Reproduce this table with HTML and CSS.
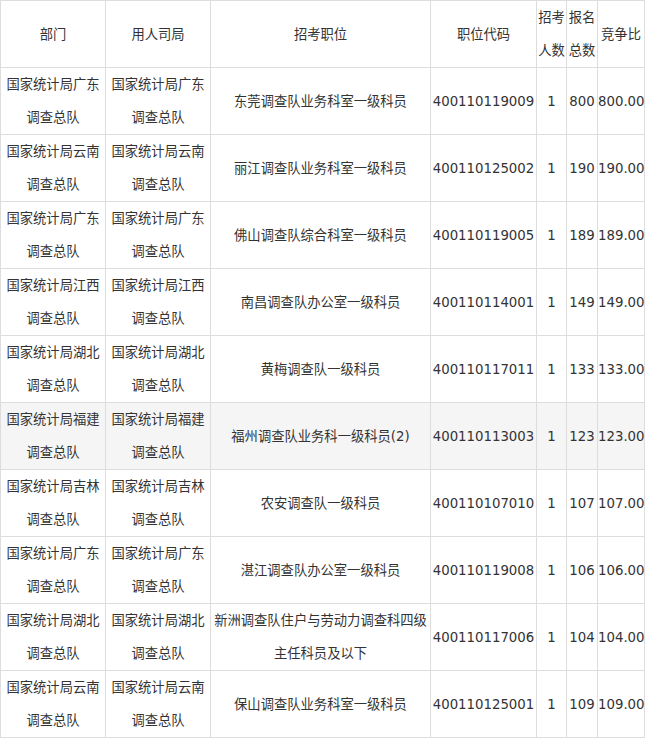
FILE: index.html
```html
<!DOCTYPE html>
<html lang="zh">
<head>
<meta charset="utf-8">
<title>职位竞争比</title>
<link rel="stylesheet" href="styles.css">
</head>
<body>
<table class="grid">
  <colgroup>
    <col class="c-dept"><col class="c-unit"><col class="c-pos"><col class="c-code"><col class="c-num"><col class="c-apply"><col class="c-ratio">
  </colgroup>
  <thead>
    <tr><th>部门</th><th>用人司局</th><th>招考职位</th><th>职位代码</th><th>招考人数</th><th>报名总数</th><th>竞争比</th></tr>
  </thead>
  <tbody>
    <tr><td>国家统计局广东调查总队</td><td>国家统计局广东调查总队</td><td>东莞调查队业务科室一级科员</td><td>400110119009</td><td>1</td><td>800</td><td>800.00</td></tr>
    <tr><td>国家统计局云南调查总队</td><td>国家统计局云南调查总队</td><td>丽江调查队业务科室一级科员</td><td>400110125002</td><td>1</td><td>190</td><td>190.00</td></tr>
    <tr><td>国家统计局广东调查总队</td><td>国家统计局广东调查总队</td><td>佛山调查队综合科室一级科员</td><td>400110119005</td><td>1</td><td>189</td><td>189.00</td></tr>
    <tr><td>国家统计局江西调查总队</td><td>国家统计局江西调查总队</td><td>南昌调查队办公室一级科员</td><td>400110114001</td><td>1</td><td>149</td><td>149.00</td></tr>
    <tr><td>国家统计局湖北调查总队</td><td>国家统计局湖北调查总队</td><td>黄梅调查队一级科员</td><td>400110117011</td><td>1</td><td>133</td><td>133.00</td></tr>
    <tr class="hl"><td>国家统计局福建调查总队</td><td>国家统计局福建调查总队</td><td>福州调查队业务科一级科员(2)</td><td>400110113003</td><td>1</td><td>123</td><td>123.00</td></tr>
    <tr><td>国家统计局吉林调查总队</td><td>国家统计局吉林调查总队</td><td>农安调查队一级科员</td><td>400110107010</td><td>1</td><td>107</td><td>107.00</td></tr>
    <tr><td>国家统计局广东调查总队</td><td>国家统计局广东调查总队</td><td>湛江调查队办公室一级科员</td><td>400110119008</td><td>1</td><td>106</td><td>106.00</td></tr>
    <tr><td>国家统计局湖北调查总队</td><td>国家统计局湖北调查总队</td><td>新洲调查队住户与劳动力调查科四级主任科员及以下</td><td>400110117006</td><td>1</td><td>104</td><td>104.00</td></tr>
    <tr><td>国家统计局云南调查总队</td><td>国家统计局云南调查总队</td><td>保山调查队业务科室一级科员</td><td>400110125001</td><td>1</td><td>109</td><td>109.00</td></tr>
  </tbody>
</table>
</body>
</html>
```

FILE: styles.css
```css
html, body {
  margin: 0;
  padding: 0;
  background: #ffffff;
}

.grid {
  border-collapse: collapse;
  table-layout: fixed;
  width: 644px;
  font-family: "DejaVu Sans", "Noto Sans CJK SC", sans-serif;
  font-size: 13.3px;
  line-height: 33px;
  color: #333333;
}

.grid th,
.grid td {
  border: 1px solid #dddddd;
  padding: 0;
  height: 66px;
  text-align: center;
  vertical-align: middle;
  font-weight: normal;
  overflow: visible;
}

.grid td:nth-child(4),
.grid td:nth-child(5),
.grid td:nth-child(6),
.grid td:nth-child(7) {
  white-space: nowrap;
}

.c-dept { width: 105px; }
.c-unit { width: 105px; }
.c-pos { width: 220px; }
.c-code { width: 106px; }
.c-num { width: 30px; }
.c-apply { width: 31px; }
.c-ratio { width: 47px; }

.grid tr.hl td {
  background: #f5f5f5;
}
```
